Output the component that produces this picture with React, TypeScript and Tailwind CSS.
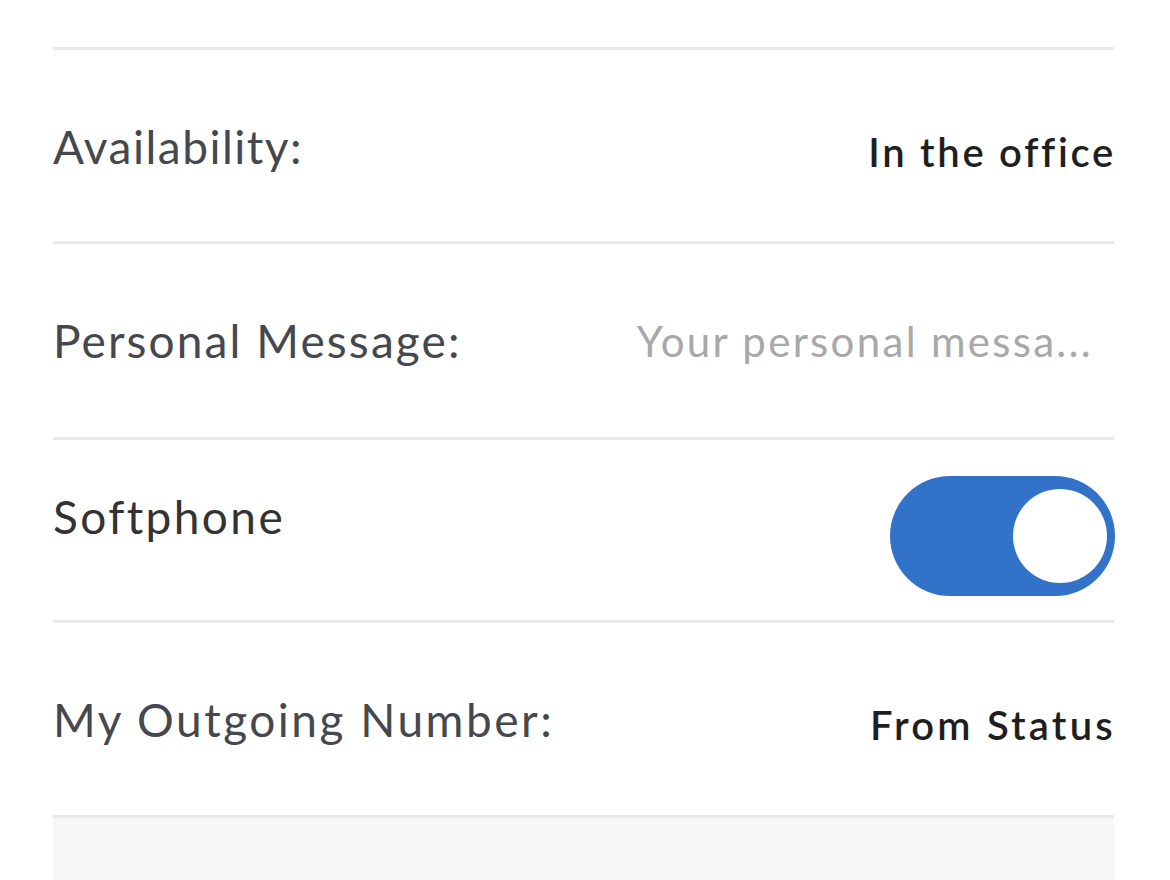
import React from "react";

const font = { fontFamily: "Lato, 'Open Sans', sans-serif" };

export default function App() {
  return (
    <div className="w-[1170px] h-[880px] bg-white overflow-hidden" style={font}>
      <div className="pl-[53px] pr-[56px] pt-[47px]">
        <div className="h-[194px] border-t-[3px] border-[#e9e9eb] flex items-center justify-between">
          <span className="text-[46px] tracking-[1.5px] text-[#45484d] leading-none mt-[2px]">Availability:</span>
          <span className="text-[40px] tracking-[2.7px] font-semibold text-[#1f1f1f] leading-none mt-[12px] -mr-[2px]">In the office</span>
        </div>
        <div className="h-[196px] border-t-[3px] border-[#e9e9eb] flex items-center justify-between">
          <span className="text-[46px] tracking-[2.1px] text-[#45484d] leading-none mt-[1px]">Personal Message:</span>
          <span className="text-[42px] tracking-[2.3px] text-[#a8a8a8] leading-none pr-[21px]">Your personal messa...</span>
        </div>
        <div className="h-[183px] border-t-[3px] border-[#e9e9eb] flex items-center justify-between">
          <span className="text-[46px] tracking-[2.4px] text-[#333333] leading-none -mt-[27px]">Softphone</span>
          <div className="w-[225px] h-[120px] rounded-full bg-[#3273c9] flex items-center justify-end pr-[8px] mt-[12px] -mr-[1px]">
            <div className="w-[94px] h-[94px] rounded-full bg-white" />
          </div>
        </div>
        <div className="h-[195px] border-t-[3px] border-[#e9e9eb] flex items-center justify-between">
          <span className="text-[46px] tracking-[2.5px] text-[#45484d] leading-none mt-[1px]">My Outgoing Number:</span>
          <span className="text-[40px] tracking-[3.2px] font-semibold text-[#1f1f1f] leading-none mt-[12px] -mr-[2px]">From Status</span>
        </div>
        <div className="h-[70px] border-t-[3px] border-[#e9e9eb] bg-[#f6f7f9]" />
      </div>
    </div>
  );
}
